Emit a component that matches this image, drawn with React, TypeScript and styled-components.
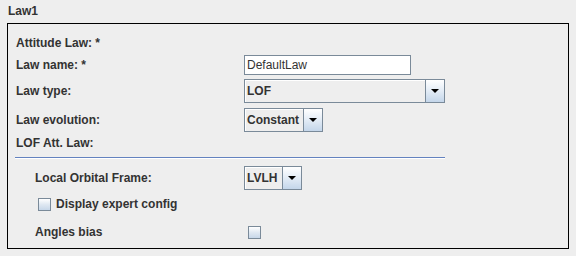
import React from 'react';
import styled, { createGlobalStyle } from 'styled-components';

const GlobalStyle = createGlobalStyle`
    html, body {
        margin: 0;
        padding: 0;
        background: #eeeeee;
    }
    body {
        font-family: 'Liberation Sans', Arial, sans-serif;
        font-size: 12px;
        color: #333333;
    }
`;

const Page = styled.div`
    width: 576px;
    height: 256px;
    padding: 4px 8px 0 7px;
    box-sizing: border-box;
    background: #eeeeee;
`;

const Title = styled.div`
    font-weight: bold;
    line-height: 14px;
    height: 14px;
    padding-left: 1px;
    margin-bottom: 5px;
`;

const Panel = styled.div`
    width: 562px;
    height: 226px;
    box-sizing: border-box;
    border: 1px solid #000000;
    padding: 11px 8px 0 8px;
    display: flex;
    flex-direction: column;
`;

const Row = styled.div<{ $h: number; $mt?: number; $indent?: number }>`
    display: flex;
    align-items: center;
    height: ${p => p.$h}px;
    margin-top: ${p => p.$mt || 0}px;
    padding-left: ${p => p.$indent || 0}px;
`;

const Label = styled.div<{ $w?: number }>`
    font-weight: bold;
    line-height: 14px;
    width: ${p => (p.$w ? `${p.$w}px` : 'auto')};
    flex-shrink: 0;
    white-space: nowrap;
`;

const TextField = styled.div`
    width: 167px;
    height: 20px;
    box-sizing: border-box;
    border: 1px solid #7a8a99;
    background: #ffffff;
    padding-left: 2px;
    line-height: 18px;
    font-size: 12px;
`;

const Combo = styled.div<{ $w: number }>`
    display: flex;
    width: ${p => p.$w}px;
    height: 24px;
    box-sizing: border-box;
    border: 1px solid #7a8a99;
    background: #eeeeee;
`;

const ComboValue = styled.div`
    flex: 1;
    font-weight: bold;
    line-height: 22px;
    padding-left: 2px;
    box-shadow: inset 1px 1px 0 #ffffff;
`;

const ArrowButton = styled.div`
    width: 18px;
    border-left: 1px solid #7a8a99;
    background: linear-gradient(#ffffff 0%, #e6eef7 45%, #c4d6ea 100%);
    display: flex;
    align-items: center;
    justify-content: center;
`;

const Arrow = styled.div`
    width: 0;
    height: 0;
    border-left: 4px solid transparent;
    border-right: 4px solid transparent;
    border-top: 4px solid #000000;
`;

const Separator = styled.div`
    width: 430px;
    height: 1px;
    margin-left: -1px;
    margin-top: 7px;
    background: #6382bf;
    border-bottom: 1px solid #ffffff;
`;

const Box = styled.div`
    width: 13px;
    height: 13px;
    box-sizing: border-box;
    border: 1px solid #7a8a99;
    background: linear-gradient(#ffffff 0%, #dfe8f2 50%, #c7d7e9 100%);
    flex-shrink: 0;
`;

const CheckLabel = styled.div`
    display: flex;
    align-items: center;
    gap: 5px;
    font-weight: bold;
`;

const ComboBox = ({ value, width }: { value: string; width: number }) => (
    <Combo $w={width}>
        <ComboValue>{value}</ComboValue>
        <ArrowButton>
            <Arrow />
        </ArrowButton>
    </Combo>
);

export default function App() {
    return (
        <Page>
            <GlobalStyle />
            <Title>Law1</Title>
            <Panel>
                <Row $h={16}>
                    <Label>Attitude Law: *</Label>
                </Row>
                <Row $h={20} $mt={4}>
                    <Label $w={228}>Law name: *</Label>
                    <TextField>DefaultLaw</TextField>
                </Row>
                <Row $h={24} $mt={4}>
                    <Label $w={228}>Law type:</Label>
                    <ComboBox value="LOF" width={201} />
                </Row>
                <Row $h={24} $mt={5}>
                    <Label $w={228}>Law evolution:</Label>
                    <ComboBox value="Constant" width={79} />
                </Row>
                <Row $h={14} $mt={4}>
                    <Label>LOF Att. Law:</Label>
                </Row>
                <Separator />
                <Row $h={24} $mt={7} $indent={19}>
                    <Label $w={209}>Local Orbital Frame:</Label>
                    <ComboBox value="LVLH" width={58} />
                </Row>
                <Row $h={16} $mt={6} $indent={22}>
                    <CheckLabel>
                        <Box />
                        Display expert config
                    </CheckLabel>
                </Row>
                <Row $h={16} $mt={12} $indent={19}>
                    <Label $w={213}>Angles bias</Label>
                    <Box />
                </Row>
            </Panel>
        </Page>
    );
}
